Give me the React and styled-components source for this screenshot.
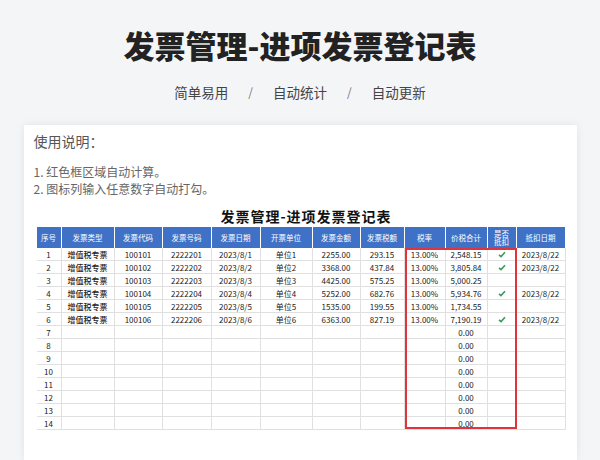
import React from "react";
import styled, { createGlobalStyle } from "styled-components";

const G = createGlobalStyle`
  body { margin:0; background:#f4f5f7; font-family:"Noto Sans CJK SC","Noto Sans",sans-serif; }
`;
const Page = styled.div`width:600px;height:460px;overflow:hidden;display:flex;flex-direction:column;align-items:center;`;
const Title = styled.h1`margin:23px 0 0;font-size:31px;line-height:44px;font-weight:900;color:#222;`;
const Sub = styled.div`margin-top:14px;display:flex;gap:20px;font-size:13.5px;color:#444;line-height:22px;`;
const Slash = styled.span`color:#777;font-size:12px;`;
const Card = styled.div`margin-top:22px;width:553px;flex:1;background:#fff;box-shadow:0 0 8px rgba(0,0,0,.08);padding:6px 0 0 10px;box-sizing:border-box;`;
const Label = styled.div`font-size:14px;color:#555;line-height:20px;`;
const Notes = styled.div`margin-top:12px;font-size:12px;color:#666;line-height:17px;`;
const TableWrap = styled.div`margin:10px 0 0 3px;width:529px;position:relative;`;
const TTitle = styled.div`text-align:center;font-size:14px;font-weight:700;color:#111;line-height:18px;padding-left:10px;letter-spacing:1px;margin-bottom:2px;`;
const Grid = styled.div`display:grid;grid-template-columns:25px 53px 48px 49px 49px 52px 48px 44px 41px 42px 29px 49px;`;
const H = styled.div`background:#3f72c6;color:#fff;font-size:7.5px;height:21px;display:flex;align-items:center;justify-content:center;text-align:center;line-height:8px;border-right:1px solid #fff;`;
const C = styled.div`height:12px;border-right:1px solid #e0e0e0;border-bottom:1px solid #e0e0e0;font-size:8px;color:#222;display:flex;align-items:center;justify-content:center;font-weight:${p=>p.b?500:400};`;
const Red = styled.div`position:absolute;left:368px;top:41px;width:112px;height:181px;border:2px solid #e0343c;box-sizing:border-box;pointer-events:none;`;
const Check = () => (<svg width="8" height="7" viewBox="0 0 8 7"><path d="M1 3.8 L3 5.6 L7 1.2" stroke="#3a9a5a" strokeWidth="1.6" fill="none"/></svg>);

const heads=["序号","发票类型","发票代码","发票号码","发票日期","开票单位","发票金额","发票税额","税率","价税合计","是否\n抵扣","抵扣日期"];
const data=[
["2255.00","293.15","2,548.15",1],["3368.00","437.84","3,805.84",1],["4425.00","575.25","5,000.25",0],
["5252.00","682.76","5,934.76",1],["1535.00","199.55","1,734.55",0],["6363.00","827.19","7,190.19",1]];

export default function App(){
  const rows=[];
  for(let i=1;i<=14;i++){
    const d=data[i-1];
    rows.push(<C key={i+"a"}>{i}</C>);
    if(d){
      rows.push(<C key={i+"b"} b>增值税专票</C>,<C key={i+"c"}>{100100+i}</C>,<C key={i+"d"}>{2222200+i}</C>,
        <C key={i+"e"}>2023/8/{i}</C>,<C key={i+"f"}>单位{i}</C>,<C key={i+"g"}>{d[0]}</C>,<C key={i+"h"}>{d[1]}</C>,
        <C key={i+"i"}>13.00%</C>,<C key={i+"j"}>{d[2]}</C>,<C key={i+"k"}>{d[3]?<Check/>:null}</C>,<C key={i+"l"}>{d[3]?"2023/8/22":""}</C>);
    } else {
      for(let k=0;k<11;k++) rows.push(<C key={i+"x"+k}>{k===8?"0.00":""}</C>);
    }
  }
  return (<Page><G/>
    <Title>发票管理-进项发票登记表</Title>
    <Sub><span>简单易用</span><Slash>/</Slash><span>自动统计</span><Slash>/</Slash><span>自动更新</span></Sub>
    <Card>
      <Label>使用说明：</Label>
      <Notes>1. 红色框区域自动计算。<br/>2. 图标列输入任意数字自动打勾。</Notes>
      <TableWrap>
        <TTitle>发票管理-进项发票登记表</TTitle>
        <Grid>{heads.map(h=><H key={h}>{h.split("\n").map((s,j)=><React.Fragment key={j}>{j?<br/>:null}{s}</React.Fragment>)}</H>)}{rows}</Grid>
        <Red/>
      </TableWrap>
    </Card>
  </Page>);
}
